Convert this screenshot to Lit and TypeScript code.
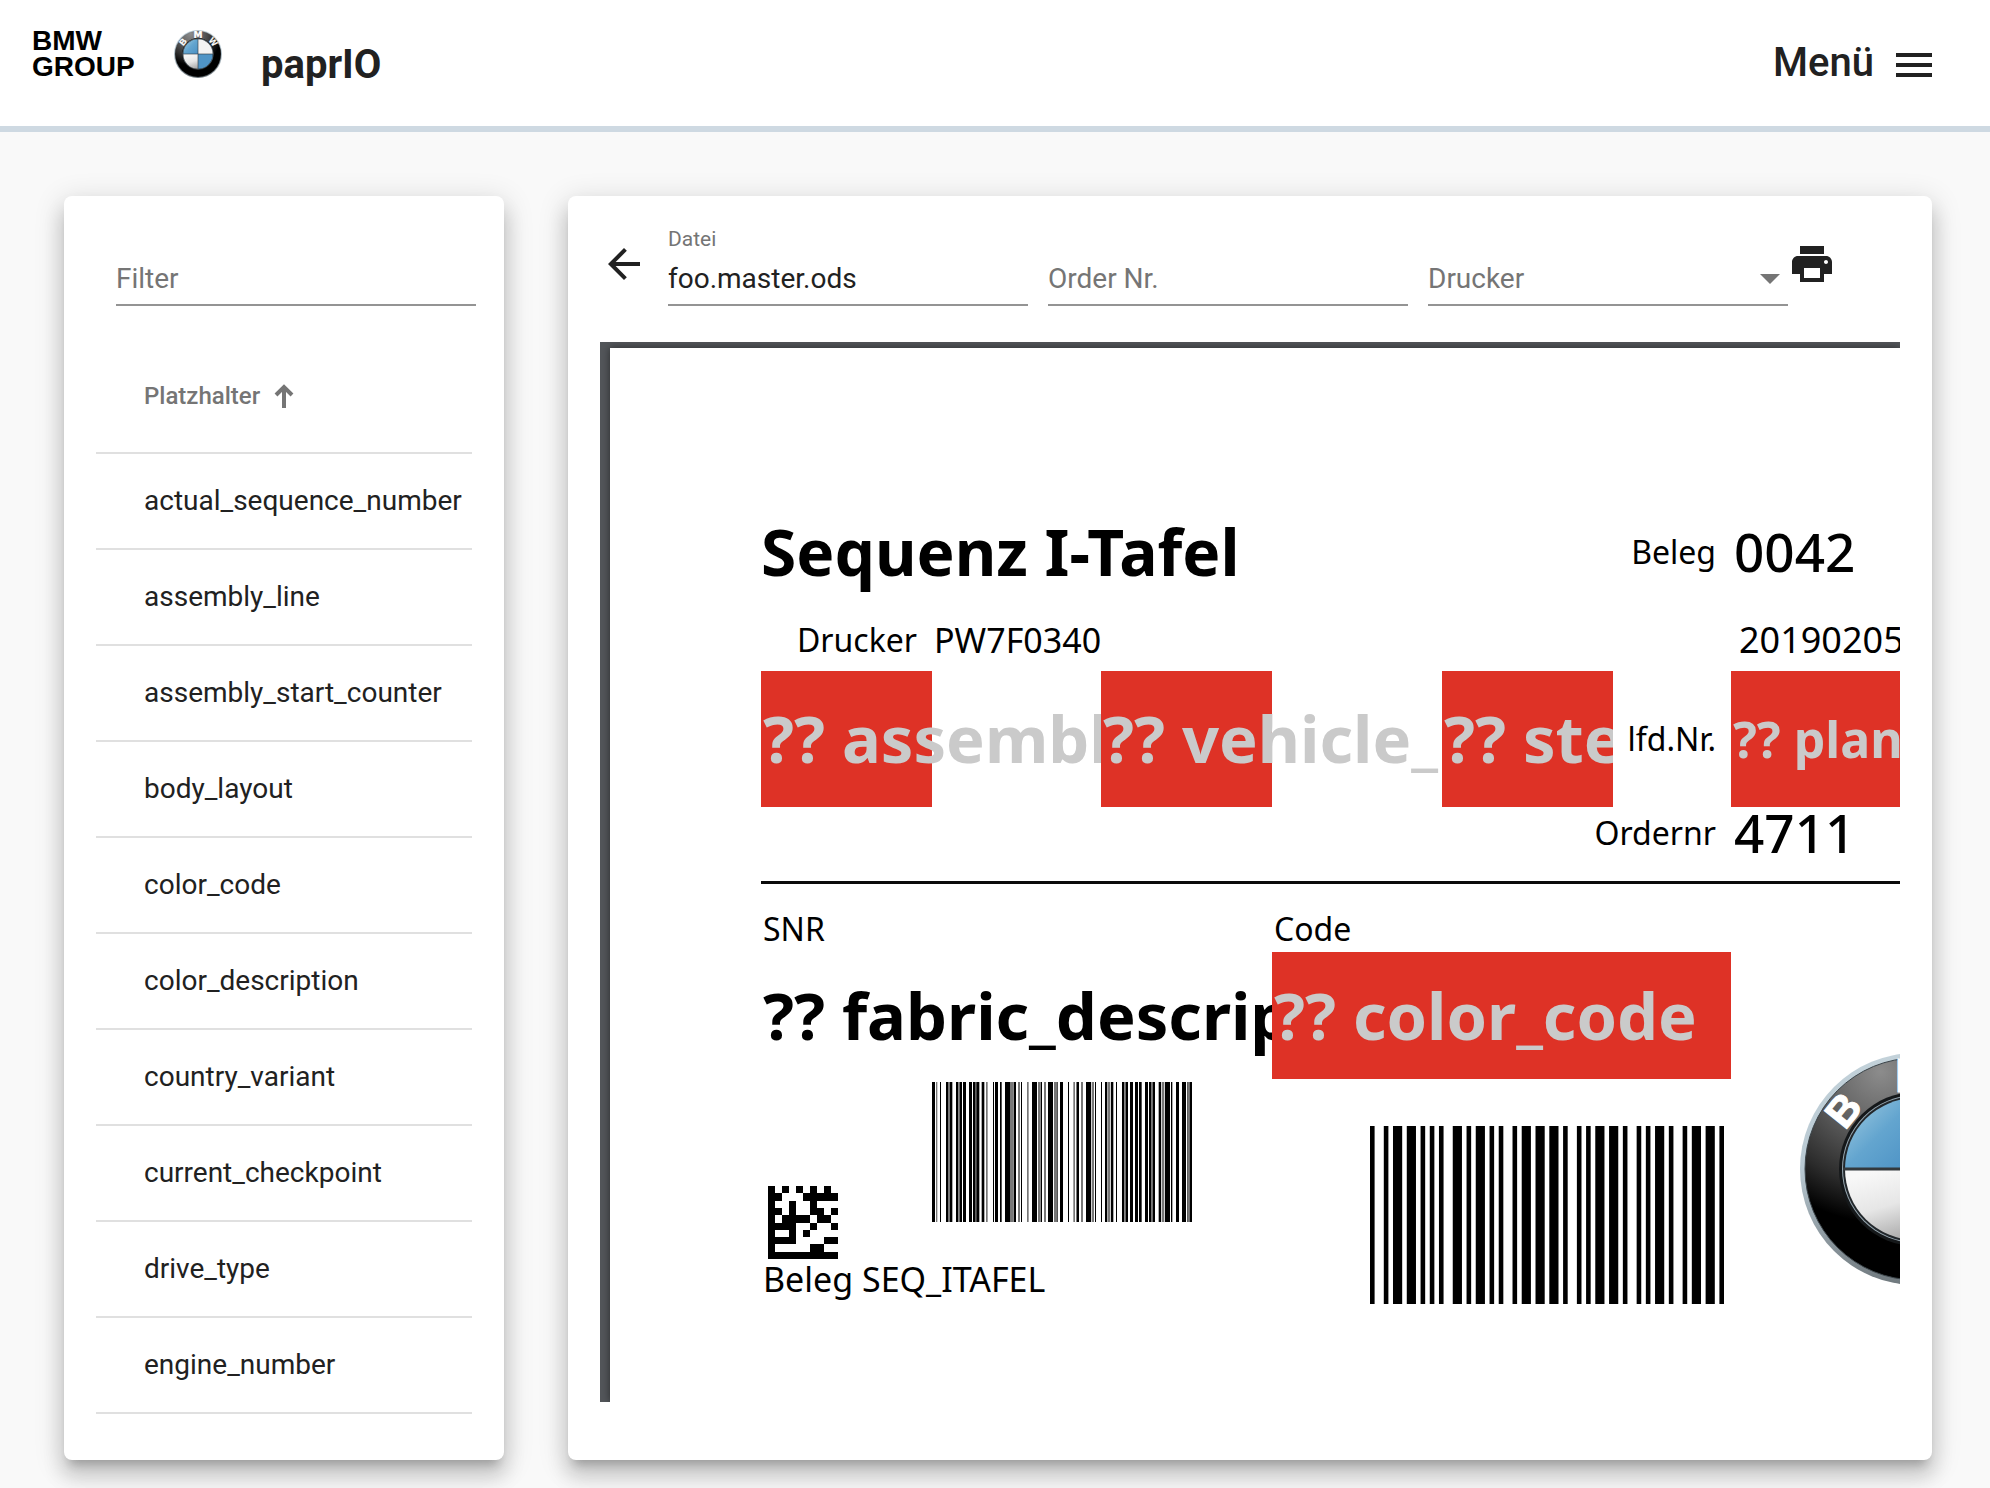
import { LitElement, html, svg, css } from "lit";
import { customElement, state } from "lit/decorators.js";

const PLACEHOLDERS = [
  "actual_sequence_number",
  "assembly_line",
  "assembly_start_counter",
  "body_layout",
  "color_code",
  "color_description",
  "country_variant",
  "current_checkpoint",
  "drive_type",
  "engine_number",
];

const MATRIX = [
  "1010101010",
  "1100011111",
  "1001001000",
  "1101001101",
  "1011110110",
  "1111001001",
  "1001010000",
  "1111000011",
  "1000001100",
  "1111111111",
];

/* Bars as [start, width] in modules. */
const WIDE_BARS: number[][] = [
  [0, 1], [3, 1], [5, 2], [8, 2], [11, 1], [13, 1], [15, 1], [18, 2], [21, 1], [23, 2],
  [26, 1], [28, 1], [31, 1], [33, 2], [36, 2], [39, 2], [42, 1], [45, 1], [47, 1], [49, 2],
  [52, 2], [55, 1], [58, 1], [60, 1], [62, 2], [65, 1], [68, 1], [70, 2], [73, 2], [76, 1],
];

/* Bars as [start, end, shade]; shade 1 is a half-tone bar. */
const FINE_BARS: number[][] = [
  [0, 9], [12, 16, 1], [24, 27], [42, 48], [48, 54, 1], [54, 61], [72, 79], [79, 83, 1],
  [83, 90], [93, 102], [111, 120], [123, 131], [131, 133, 1], [133, 142], [149, 157],
  [162, 167, 1], [183, 186], [189, 198], [204, 209], [219, 234], [234, 244, 1], [245, 252],
  [258, 264, 1], [267, 270], [285, 290, 1], [300, 315], [318, 325, 1], [326, 330],
  [336, 342, 1], [348, 363], [366, 375, 1], [376, 378], [384, 393], [408, 411], [424, 429, 1],
  [432, 435, 1], [435, 441], [447, 453, 1], [462, 477], [479, 486, 1], [489, 492], [507, 510],
  [519, 526], [528, 535, 1], [537, 544], [552, 555], [570, 577], [577, 581, 1], [581, 588],
  [594, 603], [609, 618], [621, 629], [639, 648], [651, 657], [657, 662, 1], [662, 669],
  [680, 687], [689, 697, 1], [699, 714], [717, 721], [732, 741], [750, 762], [765, 767],
  [767, 773, 1], [773, 780],
];

@customElement("bmw-roundel")
export class BmwRoundel extends LitElement {
  static styles = css`
    :host { display: block; flex: none; }
    svg { display: block; width: 100%; height: 100%; }
    text { font: 700 42px "Liberation Sans", Arial, sans-serif; fill: #fff; text-anchor: middle; stroke: #fff; stroke-width: 1px; }
    .top { font: 700 44px "DejaVu Sans", sans-serif; }
  `;
  render() {
    return html`<svg viewBox="-116 -116 232 232" role="img" aria-label="BMW">
      <defs>
        <linearGradient id="rim" x1="0" y1="0" x2="0" y2="1">
          <stop offset="0" stop-color="#c3d2da" />
          <stop offset=".5" stop-color="#b9c9d2" />
          <stop offset="1" stop-color="#6f787d" />
        </linearGradient>
        <radialGradient id="ring" cx=".34" cy=".06" r=".68">
          <stop offset="0" stop-color="#8c8c8c" />
          <stop offset=".4" stop-color="#5e5e5e" />
          <stop offset=".75" stop-color="#2c2c2c" />
          <stop offset="1" stop-color="#000" />
        </radialGradient>
        <linearGradient id="blue" x1="0" y1="0" x2="1" y2="1">
          <stop offset="0" stop-color="#a3cde2" />
          <stop offset=".5" stop-color="#63a5cf" />
          <stop offset="1" stop-color="#4a90c4" />
        </linearGradient>
        <linearGradient id="white" x1=".5" y1="0" x2=".8" y2="1">
          <stop offset="0" stop-color="#f8f8f8" />
          <stop offset=".5" stop-color="#e6e6e6" />
          <stop offset="1" stop-color="#a9a9a9" />
        </linearGradient>
      </defs>
      <circle r="116" fill="url(#rim)" />
      <circle r="111" fill="url(#ring)" stroke="#3a4348" />
      <circle r="77" fill="#15181a" />
      <circle r="74" fill="#98a8b2" />
      <circle r="73" fill="#22272b" />
      <path d="M0 0V-71A71 71 0 0 0 -71 0Z" fill="url(#blue)" />
      <path d="M0 0V71A71 71 0 0 0 71 0Z" fill="#4f94c6" />
      <path d="M0 0V-71A71 71 0 0 1 71 0Z" fill="#f3f3f3" />
      <path d="M0 0V71A71 71 0 0 1 -71 0Z" fill="url(#white)" />
      <path d="M-73 0H73M0 -73V73" stroke="#33393d" stroke-width="3" />
      <text class="top" y="-77">M</text>
      <text y="-79" transform="rotate(-51)">B</text>
      <text y="-79" transform="rotate(51)">W</text>
    </svg>`;
  }
}

@customElement("label-sheet")
export class LabelSheet extends LitElement {
  static styles = css`
    :host {
      display: block;
      overflow: hidden;
      background: #53565a;
      padding: 6px 0 0 10px;
      color: #000;
      font: 400 34px/40px "Noto Sans", "Open Sans", sans-serif;
    }
    .paper {
      background: #fff;
      height: 100%;
      box-sizing: border-box;
      padding: 148px 0 100px 151px;
      box-shadow: 0 0 8px rgba(0, 0, 0, 0.5);
    }
    .grid {
      display: grid;
      grid-template-columns: 171px 169px 171px 170px 171px 118px minmax(0, 1fr);
      grid-template-rows: 112px 63px 136px 52px 47px 46px 127px 180px 40px;
    }
    .grid > * { display: flex; align-items: center; white-space: nowrap; min-width: 0; }
    .cell { padding-left: 2px; }
    .label { justify-content: flex-end; padding-right: 15px; font-size: 32px; }
    .caption { font-size: 32px; }
    .title { font-weight: 700; font-size: 64px; line-height: 80px; }
    .big { font-weight: 700; font-size: 65px; line-height: 80px; padding-bottom: 2px; }
    .mid { font-weight: 700; font-size: 50px; line-height: 60px; }
    .number { font-weight: 500; font-size: 53px; line-height: 60px; padding-left: 3px; }
    .date { font-size: 36px; padding-left: 8px; }
    .flag { background: #de3226; color: #cacaca; overflow: hidden; }
    .spill { background: linear-gradient(#de3226, #de3226) 0 0 / 171px 100% no-repeat; }
    .clip { overflow: hidden; }
    .grid > .rule { display: block; align-self: center; height: 3px; margin: 0; border: 0; background: #0a0a0a; grid-area: 5 / 1 / 6 / 8; }
    .matrix { grid-area: 8 / 1; align-self: end; margin-left: 7px; width: 70px; height: 73px; }
    .fine { grid-area: 8 / 2 / 9 / 4; margin-top: 3px; width: 261px; height: 140px; }
    .wide { grid-area: 8 / 4 / 10 / 7; margin: 47px 0 0 98px; width: 354px; height: 178px; }
    .roundel { grid-area: 7 / 7 / 10 / 8; margin: 101px 0 0 69px; width: 232px; height: 232px; }
    .r1a { grid-area: 1 / 1 / 2 / 5; }
    .r1b { grid-area: 1 / 5 / 2 / 7; }
    .r1c { grid-area: 1 / 7; }
    .r2a { grid-area: 2 / 1; }
    .r2b { grid-area: 2 / 2 / 3 / 4; }
    .r2c { grid-area: 2 / 7; }
    .r3a { grid-area: 3 / 1 / 4 / 3; }
    .r3b { grid-area: 3 / 3 / 4 / 5; }
    .r3c { grid-area: 3 / 5; }
    .r3d { grid-area: 3 / 6; }
    .r3e { grid-area: 3 / 7; }
    .r4a { grid-area: 4 / 5 / 5 / 7; }
    .r4b { grid-area: 4 / 7; }
    .r6a { grid-area: 6 / 1; }
    .r6b { grid-area: 6 / 4; }
    .r7a { grid-area: 7 / 1 / 8 / 4; }
    .r7b { grid-area: 7 / 4 / 8 / 7; }
    .r9 { grid-area: 9 / 1 / 10 / 4; }
  `;

  render() {
    return html`<div class="paper">
      <div class="grid">
        <div class="title r1a">Sequenz I-Tafel</div>
        <div class="label r1b">Beleg</div>
        <div class="number r1c">0042</div>
        <div class="label r2a">Drucker</div>
        <div class="cell r2b">PW7F0340</div>
        <div class="date clip r2c">20190205</div>
        <div class="cell big flag spill r3a">?? assembly</div>
        <div class="cell big flag spill r3b">?? vehicle_</div>
        <div class="cell big flag r3c">?? ste</div>
        <div class="label r3d">lfd.Nr.</div>
        <div class="cell mid flag r3e">?? plan</div>
        <div class="label r4a">Ordernr</div>
        <div class="number r4b">4711</div>
        <hr class="rule" />
        <div class="cell caption r6a">SNR</div>
        <div class="cell caption r6b">Code</div>
        <div class="cell big clip r7a">?? fabric_descrip</div>
        <div class="cell big flag r7b">?? color_code</div>
        <svg class="matrix" viewBox="0 0 10 10" preserveAspectRatio="none" shape-rendering="crispEdges">
          ${MATRIX.map((row, y) =>
            [...row].map((m, x) => (m === "1" ? svg`<rect x=${x} y=${y} width="1" height="1" />` : null)),
          )}
        </svg>
        <svg class="fine" viewBox="0 0 783 10" preserveAspectRatio="none">
          ${FINE_BARS.map(
            ([a, b, s]) => svg`<rect x=${a} y="0" width=${b - a} height="10" fill=${s ? "#777" : "#000"} />`,
          )}
        </svg>
        <svg class="wide" viewBox="0 0 77 10" preserveAspectRatio="none">
          ${WIDE_BARS.map(([x, w]) => svg`<rect x=${x} y="0" width=${w} height="10" />`)}
        </svg>
        <bmw-roundel class="roundel"></bmw-roundel>
        <div class="cell r9">Beleg SEQ_ITAFEL</div>
      </div>
    </div>`;
  }
}

@customElement("app-root")
export class AppRoot extends LitElement {
  @state() private filter = "";
  @state() private ascending = true;

  static styles = css`
    :host {
      display: flex;
      flex-direction: column;
      min-height: 100vh;
      box-sizing: border-box;
      background: #f9f9f9;
      color: #212121;
      font: 400 28px/32px Roboto, sans-serif;
    }
    button, input, select { font: inherit; color: inherit; background: none; border: 0; padding: 0; margin: 0; border-radius: 0; }
    button { cursor: pointer; }
    .icon { display: block; width: 48px; height: 48px; fill: currentColor; flex: none; }

    header {
      display: flex;
      align-items: flex-start;
      height: 126px;
      padding: 0 52px 0 32px;
      background: #fff;
      border-bottom: 6px solid #ced9e2;
    }
    .group { width: 102px; margin-top: 28px; font: 700 28px/26px "Liberation Sans", Arial, sans-serif; color: #000; }
    .group span { display: block; }
    .roundel { width: 48px; height: 48px; margin: 30px 0 0 40px; }
    h1 { margin: 41px 0 0 39px; font-size: 40px; line-height: 48px; font-weight: 700; }
    .menu { display: flex; align-items: center; gap: 16px; margin: 37px 0 0 auto; font-size: 40px; line-height: 48px; font-weight: 500; }
    .menu .icon { margin-top: 4px; }

    main {
      flex: 1;
      display: grid;
      grid-template-columns: 440px minmax(0, 1fr);
      gap: 64px;
      padding: 64px 58px 28px 64px;
    }
    .card {
      display: flex;
      flex-direction: column;
      min-width: 0;
      background: #fff;
      border-radius: 8px;
      padding: 32px 32px 46px;
      box-shadow: 0 10px 10px -6px rgba(0, 0, 0, 0.2), 0 16px 20px 2px rgba(0, 0, 0, 0.14),
        0 6px 28px 4px rgba(0, 0, 0, 0.12);
    }
    .viewer { padding-bottom: 58px; }

    .field { display: flex; flex-direction: column; justify-content: flex-end; gap: 11px; height: 78px; flex: 1; min-width: 0; }
    .field label { font-size: 21px; line-height: 24px; color: #757575; }
    .field input, .field select {
      width: 100%;
      height: 44px;
      box-sizing: border-box;
      line-height: 32px;
      padding-bottom: 10px;
      border-bottom: 2px solid #949494;
      outline: 0;
      appearance: none;
    }
    .field input::placeholder { color: #757575; opacity: 1; }
    .field select { color: #757575; padding-bottom: 8px; }
    .select { display: grid; align-items: start; }
    .select > * { grid-area: 1 / 1; }
    .caret { justify-self: end; width: 20px; height: 10px; margin: 12px 8px 0 0; fill: #757575; pointer-events: none; }

    .filter { flex: none; width: 360px; margin: 0 0 36px 20px; }
    table { width: 100%; border-spacing: 0; }
    th, td { box-sizing: border-box; padding: 0 0 0 48px; text-align: left; border-bottom: 2px solid #e0e0e0; }
    th { height: 112px; padding-bottom: 2px; }
    td { height: 96px; font-weight: 400; }
    .sort { display: flex; align-items: center; gap: 14px; font-size: 24px; font-weight: 500; color: #757575; }
    .sort svg { width: 20px; height: 24px; fill: none; stroke: currentColor; stroke-width: 4; }
    .desc svg { transform: rotate(180deg); }

    .toolbar { display: flex; align-items: flex-start; padding-right: 64px; height: 114px; }
    .toolbar button { margin-top: 12px; }
    .fields { flex: 1; display: flex; gap: 20px; margin-left: 20px; }
    label-sheet { flex: 1; }
  `;

  private get rows() {
    const rows = PLACEHOLDERS.filter((p) => p.includes(this.filter));
    return this.ascending ? rows : rows.reverse();
  }

  render() {
    return html`
      <header>
        <div class="group"><span>BMW</span><span>GROUP</span></div>
        <bmw-roundel class="roundel"></bmw-roundel>
        <h1>paprIO</h1>
        <button class="menu">
          Menü
          <svg class="icon" viewBox="0 0 24 24"><path d="M3 18h18v-2H3v2zm0-5h18v-2H3v2zm0-7v2h18V6H3z" /></svg>
        </button>
      </header>
      <main>
        <section class="card">
          <div class="field filter">
            <input
              aria-label="Filter"
              placeholder="Filter"
              .value=${this.filter}
              @input=${(e: Event) => (this.filter = (e.target as HTMLInputElement).value)}
            />
          </div>
          <table>
            <thead>
              <tr>
                <th>
                  <button class="sort ${this.ascending ? "" : "desc"}" @click=${() => (this.ascending = !this.ascending)}>
                    Platzhalter
                    <svg viewBox="0 0 20 24"><path d="M10 24V3M2 11L10 3L18 11" /></svg>
                  </button>
                </th>
              </tr>
            </thead>
            <tbody>
              ${this.rows.map((name) => html`<tr><td>${name}</td></tr>`)}
            </tbody>
          </table>
        </section>
        <section class="card viewer">
          <div class="toolbar">
            <button aria-label="Zurück">
              <svg class="icon" viewBox="0 0 24 24"><path d="M20 11H7.83l5.59-5.59L12 4l-8 8 8 8 1.41-1.41L7.83 13H20v-2z" /></svg>
            </button>
            <div class="fields">
              <div class="field">
                <label for="file">Datei</label>
                <input id="file" value="foo.master.ods" />
              </div>
              <div class="field">
                <input aria-label="Order Nr." placeholder="Order Nr." />
              </div>
              <div class="field">
                <div class="select">
                  <select aria-label="Drucker">
                    <option>Drucker</option>
                  </select>
                  <svg class="caret" viewBox="0 0 20 10"><path d="M0 0H20L10 10Z" /></svg>
                </div>
              </div>
            </div>
            <button aria-label="Drucken">
              <svg class="icon" viewBox="0 0 24 24"><path d="M19 8H5c-1.66 0-3 1.34-3 3v6h4v4h12v-4h4v-6c0-1.66-1.34-3-3-3zm-3 11H8v-5h8v5zm3-7c-.55 0-1-.45-1-1s.45-1 1-1 1 .45 1 1-.45 1-1 1zm-1-9H6v4h12V3z" /></svg>
            </button>
          </div>
          <label-sheet></label-sheet>
        </section>
      </main>
    `;
  }
}
